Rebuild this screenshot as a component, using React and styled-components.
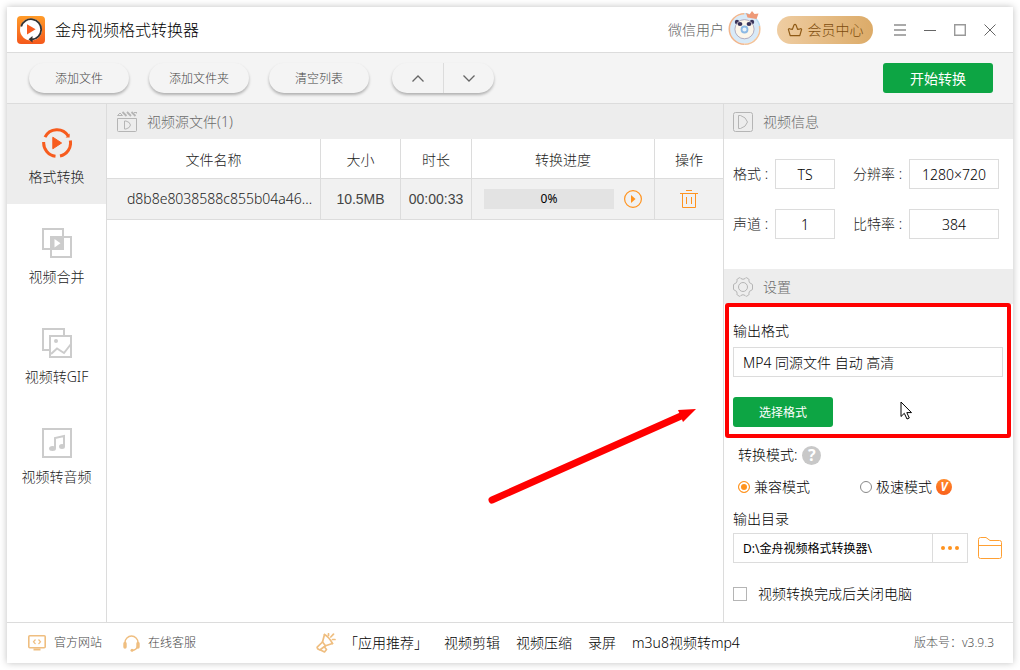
import React from "react";
import styled, { createGlobalStyle } from "styled-components";

const menus = [
  { name: "格式转换", icon: "convert" },
  { name: "视频合并", icon: "merge" },
  { name: "视频转GIF", icon: "gif" },
  { name: "视频转音频", icon: "audio" },
];

const files = [
  {
    name: "d8b8e8038588c855b04a46...",
    size: "10.5MB",
    time: "00:00:33",
    progress: 0,
  },
];

const infos = [
  { id: "format", label: "格式", value: "TS" },
  { id: "resolution", label: "分辨率", value: "1280×720" },
  { id: "channel", label: "声道", value: "1" },
  { id: "bitrate", label: "比特率", value: "384" },
];

const apps = ["视频剪辑", "视频压缩", "录屏", "m3u8视频转mp4"];

const MenuIcon = ({ type }) => {
  if (type === "convert") {
    return (
      <svg width="30" height="30" viewBox="0 0 30 30" fill="none">
        <g stroke="#f75c1e" strokeWidth="3">
          <path d="M3 9.2A13.3 13.3 0 0 1 26.3 8" />
          <path d="M28.3 12.5A13.3 13.3 0 0 1 18 28" />
          <path d="M1.7 14A13.3 13.3 0 0 0 13.5 28.2" />
        </g>
        <path d="M27.6 5.5V9.5H23.6Z" fill="#f75c1e" />
        <path
          d="M10.8 9.2L19.6 15L10.8 20.8Z"
          fill="#f75c1e"
          stroke="#f75c1e"
          strokeLinejoin="round"
        />
      </svg>
    );
  }
  if (type === "merge") {
    return (
      <svg width="30" height="30" viewBox="0 0 30 30" fill="none">
        <path d="M8 21H1V1H21V8" stroke="#ccc" strokeWidth="2" />
        <path d="M22 9H29V29H9V22" stroke="#ccc" strokeWidth="2" />
        <path d="M8 8H22V22H8Z" fill="#ccc" />
        <path d="M12.5 11L18.5 15.3L12.5 19.5Z" fill="#fff" />
      </svg>
    );
  }
  if (type === "gif") {
    return (
      <svg width="30" height="30" viewBox="0 0 30 30" fill="none">
        <g stroke="#ccc" strokeWidth="2">
          <path d="M7 22H1V1H22V7" />
          <path d="M8 8H29V29H8Z" />
          <path d="M9 26L15 20.5L22 25L29 16" />
        </g>
        <circle cx="14" cy="13" r="2" fill="#ccc" />
      </svg>
    );
  }
  return (
    <svg width="30" height="30" viewBox="0 0 30 30" fill="none">
      <path d="M1 1H29V29H1Z" stroke="#ccc" strokeWidth="2" />
      <path d="M13 20V10L22 8V18" stroke="#ccc" strokeWidth="2" />
      <ellipse cx="10.5" cy="20.5" rx="3.5" ry="2.5" fill="#ccc" />
      <ellipse cx="20" cy="18.5" rx="3" ry="2.5" fill="#ccc" />
    </svg>
  );
};

const Logo = () => (
  <svg width="28" height="28" viewBox="0 0 28 28" fill="none">
    <defs>
      <linearGradient id="logo" x1="0" y1="0" x2="0" y2="1">
        <stop offset="0" stopColor="#ff9c2a" />
        <stop offset="1" stopColor="#f4581c" />
      </linearGradient>
    </defs>
    <rect width="28" height="28" rx="4" fill="url(#logo)" />
    <circle cx="14" cy="13.5" r="11" fill="#fff" />
    <path d="M4.2 10.5A10.2 10.2 0 1 1 15 23.5" stroke="#333" strokeWidth="1.8" />
    <path d="M15.5 20V26.5L11.5 23.3Z" fill="#333" />
    <path d="M10 8.2L18.6 13.2L10 18.4Z" fill="#f75c1e" />
  </svg>
);

const Avatar = () => (
  <svg width="33" height="33" viewBox="0 3 33 33" fill="none" overflow="visible">
    <circle cx="16.5" cy="19" r="14.5" fill="#d8eaf8" />
    <path d="M16.5 3.8A15.2 15.2 0 0 0 16.5 34.2" stroke="#f0b58c" strokeWidth="1.6" />
    <path d="M16.5 34.2A15.2 15.2 0 0 0 31.5 16" stroke="#f2c39a" strokeWidth="1.6" />
    <path d="M16.5 3.8A15.2 15.2 0 0 1 31.5 16" stroke="#b9dcf0" strokeWidth="1.6" />
    <circle cx="9" cy="12" r="2.2" fill="#39345a" />
    <circle cx="24" cy="12" r="2.2" fill="#39345a" />
    <circle cx="16.5" cy="19.2" r="9.6" fill="#fcf6ea" stroke="#a39bb0" strokeWidth="0.8" />
    <ellipse cx="12" cy="14" rx="2.4" ry="2" fill="#39345a" />
    <ellipse cx="21" cy="14" rx="2.4" ry="2" fill="#39345a" />
    <circle cx="16.5" cy="19.5" r="3" fill="#e8f3fc" stroke="#8cb9e4" strokeWidth="1.8" />
    <path d="M18 3L21.5 4.5L24 1L26.5 4L30.5 3.5L28.5 9L19.5 7.5Z" fill="#ee9a78" />
  </svg>
);

const ClapIcon = () => (
  <svg width="21" height="23" viewBox="-1 -2 21 23" fill="none" stroke="#b5b5b5">
    <path d="M0.5 6.5H19.5V18.5Q19.5 19.5 18.5 19.5H1.5Q0.5 19.5 0.5 18.5Z" />
    <path d="M7.5 9V17H9Q13 16 13.5 13Q13 10 9 9Z" />
    <path d="M0.5 3.5L3 1L5.5 3.5Z" />
    <path d="M5.5 0L9.5 4M10 0L14 4M14.5 0L18.5 4" strokeWidth="1.8" />
    <path d="M17 0.5H20V2" />
  </svg>
);

const InfoIcon = () => (
  <svg width="20" height="20" viewBox="0 0 20 20" fill="none" stroke="#b5b5b5">
    <rect x="0.5" y="0.5" width="19" height="19" rx="2" />
    <path d="M5.5 3.5V16.5H7.5Q13 15 14.5 10Q13 5 7.5 3.5Z" />
  </svg>
);

const GearIcon = () => (
  <svg width="20" height="20" viewBox="0 0 20 20" fill="none" stroke="#b5b5b5">
    <path d="M6.5 0.7Q7.3 0.5 8 1.6Q10 3 12 1.6Q12.7 0.5 13.5 0.7L15.7 2Q16.3 2.6 15.9 3.8Q16 6.2 18.2 6.6Q19.4 7 19.5 8V12Q19.4 13 18.2 13.4Q16 13.8 15.9 16.2Q16.3 17.4 15.7 18L13.5 19.3Q12.7 19.5 12 18.4Q10 17 8 18.4Q7.3 19.5 6.5 19.3L4.3 18Q3.7 17.4 4.1 16.2Q4 13.8 1.8 13.4Q0.6 13 0.5 12V8Q0.6 7 1.8 6.6Q4 6.2 4.1 3.8Q3.7 2.6 4.3 2Z" />
    <circle cx="10" cy="10" r="4.5" />
  </svg>
);

const App = () => {
  const [menu, setMenu] = React.useState(0);
  const [mode, setMode] = React.useState("compatible");
  const [shutdown, setShutdown] = React.useState(false);

  return (
    <React.Fragment>
      <GlobalStyle />
      <Window>
        <TitleBar>
          <Logo />
          <Title>金舟视频格式转换器</Title>
          <User>
            微信用户
            <Avatar />
          </User>
          <VipButton>
            <svg width="16" height="14" viewBox="0 0 16 14" fill="none" stroke="#8f5a15">
              <path
                d="M3.2 12.6L1.4 6.4Q1.6 5.4 2.8 5.8L5.4 6.4L7 2Q8 0.6 9 2L10.6 6.4L13.2 5.8Q14.4 5.4 14.6 6.4L12.8 12.6Z"
                strokeWidth="1.2"
                strokeLinejoin="round"
              />
            </svg>
            会员中心
          </VipButton>
          <WindowButtons>
            <WindowButton aria-label="菜单">
              <svg width="12" height="12" viewBox="0 0 12 12" stroke="#aaa" strokeWidth="2">
                <path d="M0 1H12M0 6H12M0 11H12" />
              </svg>
            </WindowButton>
            <WindowButton aria-label="最小化">
              <svg width="12" height="12" viewBox="0 0 12 12" stroke="#666">
                <path d="M0 6.5H12" />
              </svg>
            </WindowButton>
            <WindowButton aria-label="最大化">
              <svg width="12" height="12" viewBox="0 0 12 12" stroke="#999" fill="none">
                <path d="M0.7 0.7H11.3V11.3H0.7Z" strokeWidth="1.4" />
              </svg>
            </WindowButton>
            <WindowButton aria-label="关闭">
              <svg width="12" height="12" viewBox="0 0 12 12" stroke="#666">
                <path d="M0.5 0.5L11.5 11.5M11.5 0.5L0.5 11.5" />
              </svg>
            </WindowButton>
          </WindowButtons>
        </TitleBar>

        <Toolbar>
          <PillButton>添加文件</PillButton>
          <PillButton>添加文件夹</PillButton>
          <PillButton>清空列表</PillButton>
          <ArrowGroup>
            <ArrowButton aria-label="上移">
              <svg width="12" height="7" viewBox="0 0 12 7" stroke="#666" fill="none">
                <path d="M0.5 6.5L6 1L11.5 6.5" strokeWidth="1.3" />
              </svg>
            </ArrowButton>
            <ArrowButton aria-label="下移">
              <svg width="12" height="7" viewBox="0 0 12 7" stroke="#666" fill="none">
                <path d="M0.5 0.5L6 6L11.5 0.5" strokeWidth="1.3" />
              </svg>
            </ArrowButton>
          </ArrowGroup>
          <StartButton>开始转换</StartButton>
        </Toolbar>

        <Body>
          <Sidebar>
            {menus.map((m, i) => {
              return (
                <MenuItem key={m.icon} $active={i === menu} onClick={() => setMenu(i)}>
                  <MenuIcon type={m.icon} />
                  {m.name}
                </MenuItem>
              );
            })}
          </Sidebar>

          <Main>
            <SectionTitle>
              <ClapIcon />
              视频源文件({files.length})
            </SectionTitle>
            <Table>
              <colgroup>
                <col />
                <col width="80" />
                <col width="71" />
                <col width="183" />
                <col width="69" />
              </colgroup>
              <thead>
                <tr>
                  <Th>文件名称</Th>
                  <Th>大小</Th>
                  <Th>时长</Th>
                  <Th>转换进度</Th>
                  <Th>操作</Th>
                </tr>
              </thead>
              <tbody>
                {files.map((f) => {
                  return (
                    <tr key={f.name}>
                      <Td $name>{f.name}</Td>
                      <Td $arial>{f.size}</Td>
                      <Td $arial>{f.time}</Td>
                      <Td>
                        <ProgressCell>
                          <Progress>
                            <Bar style={{ width: `${f.progress}%` }} />
                            <Percent>{f.progress}%</Percent>
                          </Progress>
                          <IconButton aria-label="开始">
                            <svg width="18" height="18" viewBox="0 0 18 18" fill="none">
                              <circle cx="9" cy="9" r="8.4" stroke="#ff931e" strokeWidth="1.2" />
                              <path d="M7 5L11.5 9L7 13Z" fill="#ff931e" />
                            </svg>
                          </IconButton>
                        </ProgressCell>
                      </Td>
                      <Td>
                        <IconButton aria-label="删除">
                          <svg width="18" height="18" viewBox="0 0 18 18" fill="none" stroke="#ff931e">
                            <path d="M6 0.5H12M0 3.5H18M2.5 4V17.5H15.5V4M6.5 7V14M11.5 7V14" />
                          </svg>
                        </IconButton>
                      </Td>
                    </tr>
                  );
                })}
              </tbody>
            </Table>
          </Main>

          <Panel>
            <SectionTitle>
              <InfoIcon />
              视频信息
            </SectionTitle>
            <InfoGrid>
              {infos.map((info) => {
                return (
                  <React.Fragment key={info.id}>
                    <InfoLabel htmlFor={info.id}>{info.label}</InfoLabel>
                    <InfoInput id={info.id} value={info.value} readOnly />
                  </React.Fragment>
                );
              })}
            </InfoGrid>

            <SectionTitle>
              <GearIcon />
              设置
            </SectionTitle>
            <OutputBox>
              <FieldLabel htmlFor="output">输出格式</FieldLabel>
              <OutputInput id="output" value="MP4 同源文件 自动 高清" readOnly />
              <FormatButton>选择格式</FormatButton>
              <Cursor width="13" height="19" viewBox="0 0 13 19">
                <path
                  d="M1 1V15.5L4.3 12.3L7 18L9.3 17L6.8 11.6H11.5Z"
                  fill="#fff"
                  stroke="#000"
                />
              </Cursor>
              <RedArrow width="210" height="98" viewBox="0 0 210 98">
                <path d="M5 94L194 10" stroke="#f00" strokeWidth="7" strokeLinecap="round" />
                <path d="M209 3L196 16L191 4Z" fill="#f00" />
              </RedArrow>
            </OutputBox>

            <ModeTitle>
              转换模式:
              <Help>?</Help>
            </ModeTitle>
            <ModeRow>
              <ModeLabel>
                <Radio
                  name="mode"
                  checked={mode === "compatible"}
                  onChange={() => setMode("compatible")}
                />
                兼容模式
              </ModeLabel>
              <ModeLabel>
                <Radio
                  name="mode"
                  checked={mode === "fast"}
                  onChange={() => setMode("fast")}
                />
                极速模式
                <VipBadge>V</VipBadge>
              </ModeLabel>
            </ModeRow>

            <FolderArea>
              <FieldLabel htmlFor="folder" $tight>
                输出目录
              </FieldLabel>
              <FolderRow>
                <FolderInput id="folder" defaultValue="D:\金舟视频格式转换器\" />
                <MoreButton aria-label="更改目录">
                  <svg width="18" height="4" viewBox="0 0 18 4" fill="#ff931e">
                    <circle cx="2" cy="2" r="2" />
                    <circle cx="9" cy="2" r="2" />
                    <circle cx="16" cy="2" r="2" />
                  </svg>
                </MoreButton>
                <IconButton aria-label="打开目录">
                  <svg width="24" height="22" viewBox="0 0 24 22" fill="none" stroke="#ffa033">
                    <path d="M0.5 19.5V2.5Q0.5 0.5 2.5 0.5H8L12 3.5H21.5Q23.5 3.5 23.5 5.5V19.5Q23.5 21.5 21.5 21.5H2.5Q0.5 21.5 0.5 19.5ZM0.5 8.5H23.5" />
                  </svg>
                </IconButton>
              </FolderRow>
            </FolderArea>

            <ShutdownLabel>
              <Checkbox
                checked={shutdown}
                onChange={(e) => setShutdown(e.target.checked)}
              />
              视频转换完成后关闭电脑
            </ShutdownLabel>
          </Panel>
        </Body>

        <Footer>
          <SiteLinks>
            <SiteLink href="#site">
              <svg width="18" height="16" viewBox="0 0 18 16" fill="none" stroke="#efbe80">
                <rect x="0.8" y="0.8" width="16.4" height="12" rx="1" strokeWidth="1.6" />
                <path d="M7.5 4.5L5.5 6.8L7.5 9M10.5 4.5L12.5 6.8L10.5 9" strokeWidth="1.2" />
                <path d="M5.5 14.5H12.5" strokeWidth="2" />
              </svg>
              官方网站
            </SiteLink>
            <SiteLink href="#service">
              <svg width="17" height="17" viewBox="0 0 17 17" fill="none" stroke="#efbe80">
                <path d="M2 8V7.5A6.5 6.5 0 0 1 15 7.5V8M14.5 11.5Q13.5 15 9 15.5" strokeWidth="1.4" />
                <path d="M2 8.5V12M15 8.5V12" strokeWidth="3.4" strokeLinecap="round" />
                <circle cx="9" cy="15.3" r="1.5" fill="#efbe80" stroke="none" />
              </svg>
              在线客服
            </SiteLink>
          </SiteLinks>
          <Apps>
            <svg
              width="20"
              height="20"
              viewBox="0 0 20 20"
              fill="none"
              stroke="#efbe80"
              strokeWidth="1.7"
              strokeLinejoin="round"
              strokeLinecap="round"
            >
              <path d="M8.5 1.5L6.5 9L1.2 14.2Q0.8 16 3.8 17L9.5 12.8L16.5 10.5" />
              <path d="M8.5 1.5Q13 4 16.5 10.5M6.5 9L9.5 12.8M4.5 17L8.5 19L10.5 16.5L8.5 14" />
              <path d="M12.5 0.8V2.5M17.5 1.2L14.8 4M16.5 6.5H19" />
            </svg>
            <Recommend>「应用推荐」</Recommend>
            {apps.map((a) => {
              return (
                <AppLink href="#app" key={a}>
                  {a}
                </AppLink>
              );
            })}
          </Apps>
          <Version>版本号：v3.9.3</Version>
        </Footer>
      </Window>
    </React.Fragment>
  );
};

const GlobalStyle = createGlobalStyle`
  * {
    box-sizing: border-box;
  }
  body {
    margin: 0;
    background: #fff;
    color: #222;
    font-family: "Noto Sans", "Noto Sans CJK SC", sans-serif;
    font-size: 14px;
    font-weight: 300;
    line-height: 20px;
  }
  button,
  input {
    font: inherit;
    color: inherit;
    margin: 0;
    padding: 0;
  }
  button {
    display: flex;
    align-items: center;
    justify-content: center;
    border: none;
    background: none;
    cursor: pointer;
    white-space: nowrap;
  }
  a {
    color: inherit;
    text-decoration: none;
  }
  svg {
    display: block;
    flex-shrink: 0;
  }
`;

const Window = styled.div`
  display: flex;
  flex-direction: column;
  min-height: calc(100vh - 14px);
  margin: 7px;
  background: #fff;
  box-shadow: 0 0 7px rgba(0, 0, 0, 0.25);
`;

const TitleBar = styled.header`
  display: flex;
  align-items: center;
  height: 46px;
  padding: 0 16px 0 10px;
  border-bottom: 1px solid #dcdcdc;
`;

const Title = styled.h1`
  margin: 0 auto 0 10px;
  color: #000;
  font-size: 16px;
  font-weight: 300;
`;

const User = styled.div`
  display: flex;
  align-items: center;
  gap: 4px;
  color: #666;
`;

const VipButton = styled.button`
  gap: 5px;
  width: 96px;
  height: 28px;
  margin: 0 20px 0 16px;
  border-radius: 14px;
  background: linear-gradient(90deg, #efcda2, #dcab68);
  color: #7d4c0c;
`;

const WindowButtons = styled.div`
  display: flex;
  gap: 16px;
`;

const WindowButton = styled.button`
  width: 14px;
  height: 14px;
`;

const Toolbar = styled.div`
  display: flex;
  align-items: center;
  gap: 20px;
  height: 51px;
  padding: 0 20px 0 22px;
  border-bottom: 1px solid #dcdcdc;
  background: #f4f4f4;
`;

const PillButton = styled.button`
  width: 100px;
  height: 30px;
  padding-top: 2px;
  border-radius: 15px;
  background: #f4f4f4;
  box-shadow: 0 2px 3px rgba(0, 0, 0, 0.28);
  color: #444;
  font-size: 12px;
`;

const ArrowGroup = styled.div`
  display: flex;
  margin-left: 3px;
  border-radius: 15px;
  box-shadow: 0 2px 3px rgba(0, 0, 0, 0.28);
`;

const ArrowButton = styled.button`
  width: 51px;
  height: 30px;

  & + & {
    border-left: 1px solid #dcdcdc;
  }
`;

const GreenButton = styled.button`
  height: 30px;
  padding-top: 2px;
  border-radius: 3px;
  background: #0da544;
  color: #fff;
  font-weight: 400;
`;

const StartButton = styled(GreenButton)`
  width: 110px;
  margin-left: auto;
`;

const FormatButton = styled(GreenButton)`
  width: 100px;
  margin-top: 20px;
  font-size: 12px;
`;

const Body = styled.div`
  display: flex;
  flex: 1;
`;

const Sidebar = styled.nav`
  width: 100px;
  border-right: 1px solid #dcdcdc;
`;

const MenuItem = styled.button`
  flex-direction: column;
  gap: 9px;
  width: 100%;
  height: 100px;
  padding-top: 6px;
  background: ${(props) => (props.$active ? "#ededed" : "#fff")};
`;

const Main = styled.main`
  flex: 1;
  min-width: 0;
`;

const SectionTitle = styled.h2`
  display: flex;
  align-items: center;
  gap: 10px;
  height: 35px;
  margin: 0;
  padding: 0 9px;
  background: #ededed;
  color: #6b6b6b;
  font-size: 14px;
  font-weight: 300;
`;

const Table = styled.table`
  width: 100%;
  table-layout: fixed;
  border-collapse: separate;
  border-spacing: 0;
`;

const Th = styled.th`
  height: 40px;
  padding: 2px 0 0;
  border-bottom: 1px solid #dcdcdc;
  font-weight: 300;

  & + & {
    border-left: 1px solid #dcdcdc;
  }
`;

const Td = styled.td`
  height: 41px;
  padding: ${(props) => (props.$name ? "0 0 0 12px" : "0")};
  border-bottom: 1px solid #dcdcdc;
  background: #f1f1f1;
  color: ${(props) => (props.$arial ? "#444" : "inherit")};
  font-family: ${(props) => (props.$arial ? '"Liberation Sans", sans-serif' : "inherit")};
  text-align: center;
  white-space: nowrap;

  & + & {
    border-left: 1px solid #dcdcdc;
  }
`;

const ProgressCell = styled.div`
  display: flex;
  align-items: center;
  gap: 10px;
  padding: 0 12px;
`;

const Progress = styled.div`
  position: relative;
  flex: 1;
  height: 20px;
  background: #e3e3e3;
`;

const Bar = styled.div`
  height: 100%;
  background: #ff931e;
`;

const Percent = styled.span`
  position: absolute;
  inset: 0;
  color: #000;
  font-size: 12px;
  font-weight: 400;
`;

const IconButton = styled.button`
  margin: 0 auto;
`;

const Panel = styled.aside`
  width: 290px;
  border-left: 1px solid #dcdcdc;
`;

const InfoGrid = styled.div`
  display: grid;
  grid-template-columns: 42px 60px 74px 90px;
  align-items: center;
  row-gap: 20px;
  padding: 20px 14px 30px 9px;
`;

const InfoLabel = styled.label`
  white-space: nowrap;

  &:nth-of-type(even) {
    padding-left: 18px;
  }

  &::after {
    content: " :";
  }
`;

const TextInput = styled.input.attrs({ type: "text" })`
  height: 30px;
  border: 1px solid #dcdcdc;
  background: #fff;
  color: #000;
  outline: none;
`;

const InfoInput = styled(TextInput)`
  width: 100%;
  min-width: 0;
  text-align: center;
`;

const OutputBox = styled.section`
  position: relative;
  margin: -1px 2px 0 1px;
  padding: 14px 4px 7px;
  border: 4px solid #f00;
  border-radius: 3px;
`;

const FieldLabel = styled.label`
  display: block;
  margin-bottom: ${(props) => (props.$tight ? "4px" : "6px")};
  color: #000;
`;

const OutputInput = styled(TextInput)`
  display: block;
  width: 100%;
  padding: 0 9px;
`;

// mouse pointer over the output box
const Cursor = styled.svg`
  position: absolute;
  right: 94px;
  bottom: 14px;
`;

const RedArrow = styled.svg`
  position: absolute;
  right: 310px;
  bottom: -70px;
`;

const ModeTitle = styled.div`
  display: flex;
  align-items: center;
  gap: 5px;
  padding: 7px 14px 0;
  color: #000;
`;

const Help = styled.span`
  width: 19px;
  height: 19px;
  border-radius: 50%;
  background: #c8c8c8;
  color: #fff;
  font-size: 16px;
  font-weight: 700;
  line-height: 19px;
  text-align: center;
`;

const ModeRow = styled.div`
  display: grid;
  grid-template-columns: 122px 1fr;
  padding: 12px 14px;
`;

const ModeLabel = styled.label`
  display: flex;
  align-items: center;
  gap: 4px;
  color: #000;
`;

const Radio = styled.input.attrs({ type: "radio" })`
  appearance: none;
  width: 12px;
  height: 12px;
  border: 1px solid ${(props) => (props.checked ? "#ff931e" : "#888")};
  border-radius: 50%;
  background: ${(props) => (props.checked ? "#ff931e" : "#fff")};
  box-shadow: inset 0 0 0 2px #fff;
`;

const VipBadge = styled.span`
  width: 16px;
  height: 16px;
  border-radius: 50%;
  background: linear-gradient(#ff8a2a, #f9601c);
  color: #fff;
  font-size: 12px;
  font-style: italic;
  font-weight: 700;
  line-height: 16px;
  text-align: center;
`;

const FolderArea = styled.div`
  padding: 0 11px 0 9px;
`;

const FolderRow = styled.div`
  display: flex;
  align-items: center;
`;

const FolderInput = styled(TextInput)`
  flex: 1;
  min-width: 0;
  padding: 0 9px;
  font-size: 12px;
  font-weight: 400;
`;

const MoreButton = styled.button`
  width: 35px;
  height: 30px;
  margin-right: 10px;
  border: 1px solid #dcdcdc;
  border-left: none;
`;

const ShutdownLabel = styled.label`
  display: flex;
  align-items: center;
  gap: 11px;
  padding: 21px 9px 18px;
  color: #000;
`;

const Checkbox = styled.input.attrs({ type: "checkbox" })`
  appearance: none;
  width: 14px;
  height: 14px;
  border: 1px solid #b5b5b5;
  background: ${(props) => (props.checked ? "#ff931e" : "#fff")};
`;

const Footer = styled.footer`
  display: flex;
  align-items: center;
  height: 41px;
  padding: 0 19px 0 21px;
  border-top: 1px solid #dcdcdc;
`;

const SiteLinks = styled.div`
  display: flex;
  gap: 21px;
`;

const SiteLink = styled.a`
  display: flex;
  align-items: center;
  gap: 8px;
  color: #444;
  font-size: 12px;
`;

const Apps = styled.div`
  display: flex;
  align-items: center;
  margin-left: 120px;
  color: #000;
`;

const Recommend = styled.span`
  margin: 0 16px 0 8px;
`;

const AppLink = styled.a`
  margin-right: 16px;
`;

const Version = styled.div`
  margin-left: auto;
  color: #555;
  font-size: 12px;
`;

export default App;
